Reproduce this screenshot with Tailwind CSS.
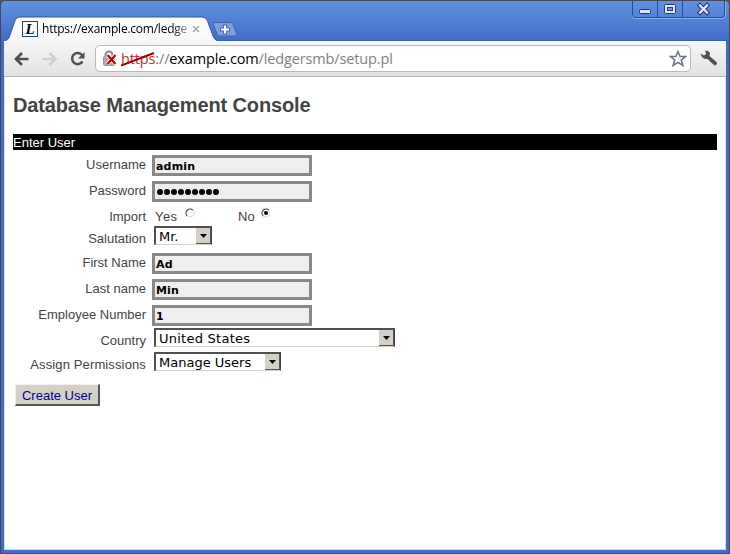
<!DOCTYPE html>
<html lang="en">
<head>
<meta charset="utf-8">
<title>Database Management Console</title>
<script src="https://cdn.jsdelivr.net/npm/@tailwindcss/browser@4"></script>
</head>
<body class="bg-[#555]">
<div class="relative flex h-[554px] w-[730px] flex-col overflow-hidden rounded-t-[5px] rounded-b-[3px] border border-[#444a55] bg-[#4070c8] bg-linear-to-b from-[#6191df] to-[#3f6cc8] to-[41px] px-[3px] pb-[3px] font-['Liberation_Sans',sans-serif]">
  <!-- Title bar -->
  <header class="relative h-[40px] shrink-0">
    <svg class="absolute -left-[3px] top-0" width="728" height="41" viewBox="1 1 728 41">
      <defs>
        <linearGradient id="tab" x1="0" y1="0" x2="0" y2="1"><stop offset="0" stop-color="#fff"/><stop offset="1" stop-color="#f7f7f7"/></linearGradient>
      </defs>
      <path d="M215 22.500h15q2.200 0 3 2l3.500 9q1 2.500-1.500 2.500h-15q-2.200 0-3-2l-3.500-9.500q-.7-2 1.500-2z" fill="#7ca0df" stroke="#3f62a6"/>
      <path d="M220 29.500h10M225 24.500v10" stroke="#4568ac" stroke-width="4"/>
      <path d="M221 29.500h8M225 25.500v8" stroke="#fff" stroke-width="2.200"/>
      <path d="M4 42V41C8 40.500 9 38 10 35L14.500 22Q16 17 20 17H202Q206 17 207.500 21L213 36Q215 41 219 41H726V42z" fill="url(#tab)" stroke="#35579b"/>
    </svg>
    <div class="relative flex items-center pt-[20px] pl-[18px]">
      <span class="flex h-4 w-4 shrink-0 items-center justify-center border border-[#174a75] bg-white font-['Liberation_Serif',serif] text-[15px] leading-none font-bold italic text-black">L</span>
      <span class="ml-[4px] w-[148px] overflow-hidden bg-linear-to-r from-black from-85% to-[#bbb] bg-clip-text font-['Open_Sans',sans-serif] text-[12px] leading-4 tracking-[-0.23px] whitespace-nowrap text-transparent">https://example.com/ledge</span>
      <svg class="ml-[2px]" width="8" height="8" viewBox="0 0 8 8"><path d="M1 1l6 6M7 1l-6 6" stroke="#a3a3a3" stroke-width="1.500"/></svg>
    </div>
    <svg class="absolute -top-px right-0" width="94" height="19" viewBox="632 0 94 19">
      <path d="M632.500 0V15Q632.500 18.500 636 18.500H721Q725.500 18.500 725.500 15V0" fill="none" stroke="#8eb0e9"/>
      <path d="M632.500 0V14Q632.500 17.500 636 17.500H721Q724.500 17.500 724.500 14V0M657.500 0V17M682.500 0V17" fill="none" stroke="#294c8c"/>
      <rect x="639.500" y="9.500" width="11" height="4" rx="1" fill="#dce7fb" stroke="#243c6b"/>
      <rect x="664.500" y="4.500" width="11" height="9" rx="1" fill="#dce7fb" stroke="#243c6b"/>
      <rect x="667.500" y="7.500" width="5" height="3" fill="#6e98e0" stroke="#243c6b"/>
      <path d="M700 5.500l7 7M707 5.500l-7 7" stroke="#243c6b" stroke-width="4.500" stroke-linecap="square"/>
      <path d="M700 5.500l7 7M707 5.500l-7 7" stroke="#dce7fb" stroke-width="2.300" stroke-linecap="square"/>
    </svg>
  </header>

  <!-- Toolbar -->
  <div class="z-10 flex h-[36px] shrink-0 items-center border-b border-[#b3b3b3] bg-linear-to-b from-[#f7f7f7] to-[#e2e2e2]">
    <svg width="91" height="34" viewBox="4 42 91 34" fill="none" class="shrink-0">
      <path d="M28.500 59H17M22 53l-6 6 6 6" stroke="#505050" stroke-width="2.700"/>
      <path d="M42.500 59H54M49.500 53l6 6-6 6" stroke="#cfcfcf" stroke-width="2.700"/>
      <path d="M82 55A5.600 5.600 0 1 0 82.500 61.500" stroke="#505050" stroke-width="2.500"/>
      <path d="M84.500 52v6.500h-6.500z" fill="#505050"/>
    </svg>
    <div class="flex h-[27px] w-[596px] items-center rounded-[5px] border border-[#b9b9b9] bg-white pl-[7px]">
      <svg width="15" height="17" viewBox="0 0 15 17" class="shrink-0">
        <path d="M2.500 8V5a3.500 3.500 0 0 1 7 0V8" fill="none" stroke="#888" stroke-width="2"/>
        <rect x=".5" y="6.500" width="11" height="9" rx="1" fill="#bbb" stroke="#999"/>
        <path d="M1 9h10M1 11.500h10M1 14h10" stroke="#929292"/>
        <path d="M4.500 5l8 9M12.500 5l-8 9" stroke="#fff" stroke-width="4"/>
        <path d="M4.500 5l8 9M12.500 5l-8 9" stroke="#c90000" stroke-width="2.200"/>
      </svg>
      <div class="relative ml-[3px] font-['Open_Sans',sans-serif] text-[14.500px] leading-5 tracking-[-0.14px] whitespace-nowrap text-[#808080]"><span class="text-[#c43030]">https</span>://<span class="text-black">example.com</span>/ledgersmb/setup.pl
        <svg class="absolute top-[3px] left-0" width="34" height="15" viewBox="0 0 34 15"><path d="M0 13.500L33 1" stroke="#a80000" stroke-width="2"/></svg>
      </div>
      <svg class="mr-[3px] ml-auto" width="18" height="18" viewBox="0 0 18 18"><path d="M9 1.500l2.100 5h5.400l-4.300 3.600 1.700 5.400L9 12.300l-4.900 3.200 1.700-5.400L1.500 6.500h5.400z" fill="#fff" stroke="#66748c" stroke-width="1.500"/></svg>
    </div>
    <svg class="ml-[9px]" width="18" height="18" viewBox="0 0 18 18"><path d="M0.500 3.500l3.500 2L6.200 3.800 5 .8Q9 0 10 3.500L9.500 6l7 6q1 1 0 2.500-1.300 1.500-2.500.5L7.500 9Q2 9.500.5 3.500z" fill="#505050"/></svg>
  </div>

  <!-- Page -->
  <main class="flex grow flex-col border border-t-0 border-[#dcdcdc] bg-white pr-[8px] pl-[8px] text-[13px] text-[#444]">
    <h1 class="mt-[16px] h-6 text-[20px] leading-6 font-bold tracking-[-0.14px] whitespace-nowrap">Database Management Console</h1>
    <h2 class="mt-[17px] mb-[2px] h-4 shrink-0 bg-black leading-[17px] text-white">Enter User</h2>
    <form class="grid grid-cols-[133px_1fr] grid-rows-[26px_26px_22px_24px_26px_26px_26px_24px_24px] gap-x-[6px] leading-4 whitespace-nowrap">
      <label class="pt-[5px] text-right">Username</label>
      <div class="mt-[3px] h-[21px] w-[160px] border-3 border-[#888] bg-[#eee] pl-px font-['DejaVu_Sans',sans-serif] text-[11px] leading-[17px] font-bold tracking-[0.2px] text-black">admin</div>
      <label class="pt-[5px] text-right">Password</label>
      <div class="mt-[3px] flex h-[21px] w-[160px] items-center gap-px border-3 border-[#888] bg-[#eee] pl-[2px]">
        <i class="size-[6px] rounded-full bg-black"></i><i class="size-[6px] rounded-full bg-black"></i><i class="size-[6px] rounded-full bg-black"></i><i class="size-[6px] rounded-full bg-black"></i><i class="size-[6px] rounded-full bg-black"></i><i class="size-[6px] rounded-full bg-black"></i><i class="size-[6px] rounded-full bg-black"></i><i class="size-[6px] rounded-full bg-black"></i><i class="size-[6px] rounded-full bg-black"></i>
      </div>
      <label class="pt-[5px] text-right">Import</label>
      <div class="flex pt-[4px] pl-[3px]">
        <span class="w-[30px] pt-px tracking-[0.4px]">Yes</span>
        <svg width="10" height="10" viewBox="0 0 10 10"><circle cx="5" cy="5" r="4" fill="#fff" stroke="#ddd"/><path d="M2.200 8A4 4 0 0 1 8 2.200" fill="none" stroke="#555" stroke-width="1.200"/></svg>
        <span class="ml-[43px] w-[23px] pt-px">No</span>
        <svg width="10" height="10" viewBox="0 0 10 10"><circle cx="5" cy="5" r="4" fill="#fff" stroke="#ddd"/><path d="M2.200 8A4 4 0 0 1 8 2.200" fill="none" stroke="#555" stroke-width="1.200"/><circle cx="5" cy="5" r="2" fill="#000"/></svg>
      </div>
      <label class="pt-[5px] text-right">Salutation</label>
      <div class="ml-[2px] flex h-[19px] w-[58px] border-t-2 border-r border-b border-l-2 border-t-[#505050] border-r-[#404040] border-b-[#d4d0c8] border-l-[#505050] pl-[3px] font-['DejaVu_Sans',sans-serif] text-[13px] leading-[17px] text-black">Mr.<span class="ml-auto flex w-[15px] items-center justify-center border-r border-b border-[#555] bg-[#d4d0c8]"><svg width="7" height="4" viewBox="0 0 7 4"><path d="M0 0h7L3.500 4z"/></svg></span></div>
      <label class="pt-[5px] text-right">First Name</label>
      <div class="mt-[3px] h-[21px] w-[160px] border-3 border-[#888] bg-[#eee] pl-px font-['DejaVu_Sans',sans-serif] text-[11px] leading-[17px] font-bold tracking-[0.2px] text-black">Ad</div>
      <label class="pt-[5px] text-right">Last name</label>
      <div class="mt-[3px] h-[21px] w-[160px] border-3 border-[#888] bg-[#eee] pl-px font-['DejaVu_Sans',sans-serif] text-[11px] leading-[17px] font-bold tracking-[0.1px] text-black">Min</div>
      <label class="pt-[5px] text-right">Employee Number</label>
      <div class="mt-[3px] h-[21px] w-[160px] border-3 border-[#888] bg-[#eee] pl-px font-['DejaVu_Sans',sans-serif] text-[11px] leading-[17px] font-bold text-black">1</div>
      <label class="pt-[5px] text-right">Country</label>
      <div class="ml-[2px] flex h-[19px] w-[241px] border-t-2 border-r border-b border-l-2 border-t-[#505050] border-r-[#404040] border-b-[#d4d0c8] border-l-[#505050] pl-[3px] font-['DejaVu_Sans',sans-serif] text-[13px] leading-[17px] tracking-[0.25px] text-black">United States<span class="ml-auto flex w-[15px] items-center justify-center border-r border-b border-[#555] bg-[#d4d0c8]"><svg width="7" height="4" viewBox="0 0 7 4"><path d="M0 0h7L3.500 4z"/></svg></span></div>
      <label class="pt-[5px] text-right tracking-[0.13px]">Assign Permissions</label>
      <div class="ml-[2px] flex h-[19px] w-[127px] border-t-2 border-r border-b border-l-2 border-t-[#505050] border-r-[#404040] border-b-[#d4d0c8] border-l-[#505050] pl-[3px] font-['DejaVu_Sans',sans-serif] text-[13px] leading-[17px] text-black">Manage Users<span class="ml-auto flex w-[15px] items-center justify-center border-r border-b border-[#555] bg-[#d4d0c8]"><svg width="7" height="4" viewBox="0 0 7 4"><path d="M0 0h7L3.500 4z"/></svg></span></div>
    </form>
    <button type="button" class="mt-[8px] ml-[2px] h-[22px] w-[85px] border-t border-r-2 border-b-2 border-l border-t-[#f2f0ec] border-r-[#555] border-b-[#555] border-l-[#f2f0ec] bg-[#d4d0c8] pt-px text-[13px] leading-none whitespace-nowrap text-[#000088]">Create User</button>
  </main>
</div>
</body>
</html>
